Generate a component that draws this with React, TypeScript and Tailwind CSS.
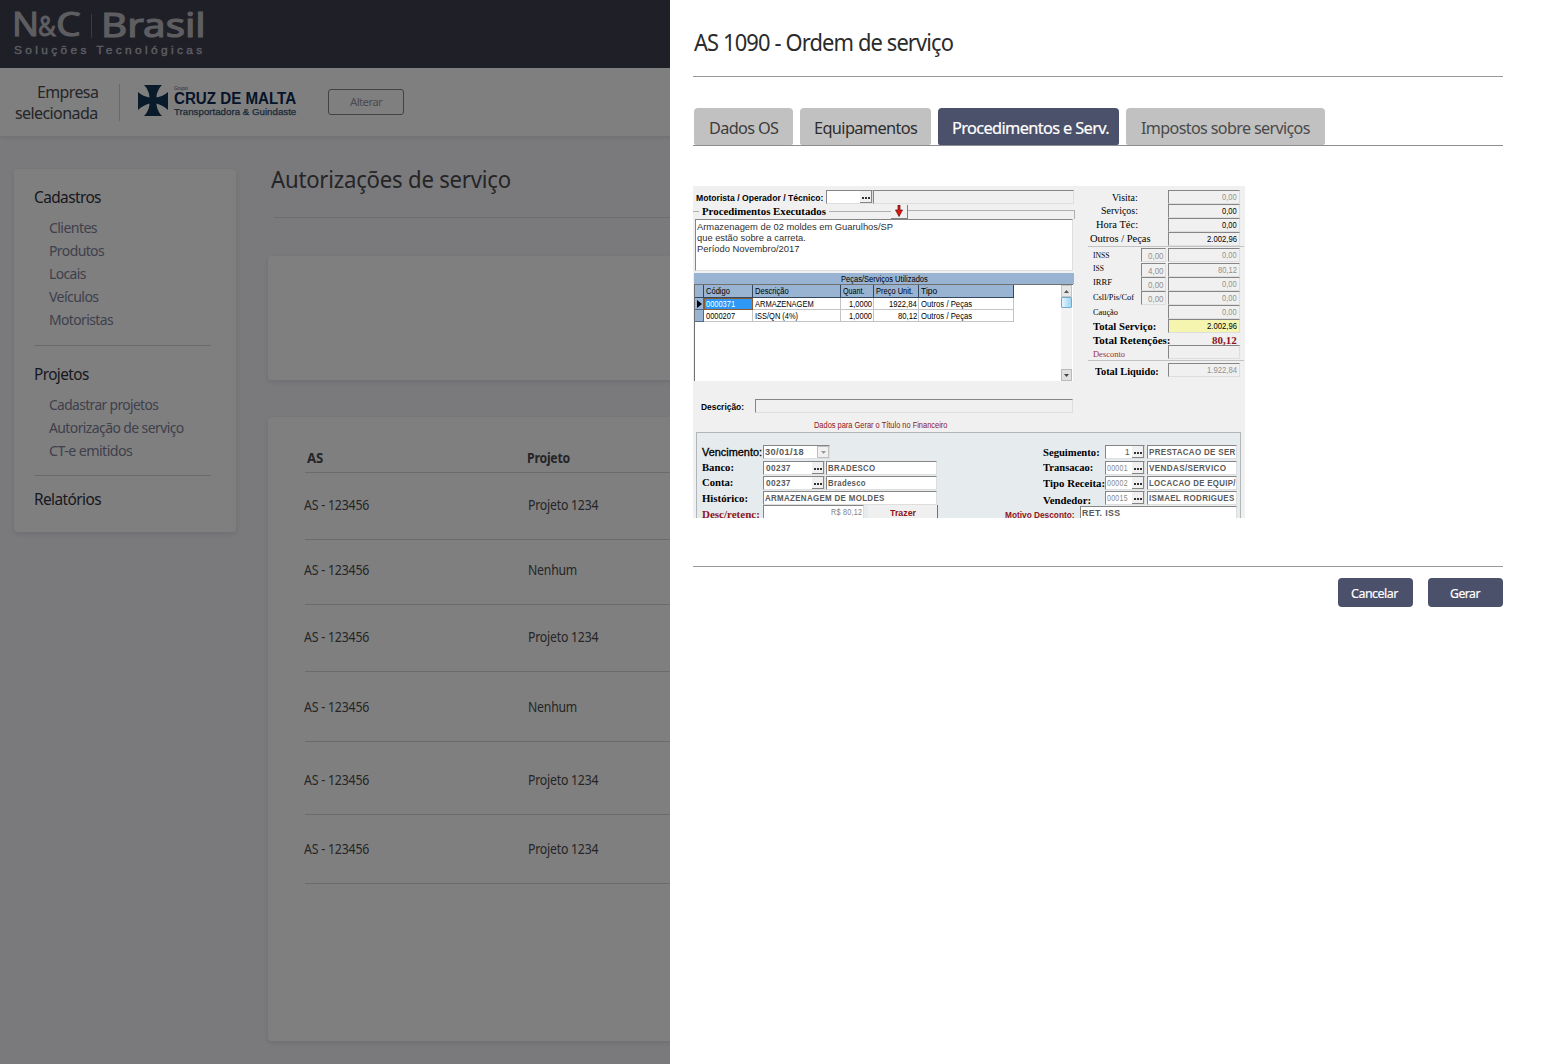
import { useLayoutEffect, useRef, useState } from "react";
import type { ReactNode } from "react";

const SANS = "font-['Noto_Sans',sans-serif]";
const ARIAL = "font-['Liberation_Sans',sans-serif]";
const SERIF = "font-['Liberation_Serif',serif]";

/* One line of text, condensed or widened to fill the width of its box. */
function Fit({ className = "", children }: { className?: string; children: ReactNode }) {
  const box = useRef<HTMLSpanElement>(null);
  const line = useRef<HTMLSpanElement>(null);
  const [scale, setScale] = useState(1);
  useLayoutEffect(() => {
    if (box.current && line.current && line.current.offsetWidth > 0) {
      setScale(box.current.getBoundingClientRect().width / line.current.offsetWidth);
    }
  }, []);
  return (
    <span ref={box} className={`block shrink-0 whitespace-nowrap ${className}`}>
      <span ref={line} className="inline-block origin-left align-top" style={{ transform: `scaleX(${scale})` }}>
        {children}
      </span>
    </span>
  );
}

function Logo() {
  return (
    <div className={`w-[192px] pt-1 tracking-normal text-[#bdbcc2] ${SANS}`}>
      <div className="flex h-9 items-center">
        <div className="flex w-[67px] shrink-0 items-baseline leading-9">
          <Fit className="-ml-[2px] w-[27px] text-[33px] [-webkit-text-stroke:1px_#bdbcc2]">N</Fit>
          <Fit className="-ml-px w-[18px] text-[27px] [-webkit-text-stroke:0.8px_#bdbcc2]">&amp;</Fit>
          <Fit className="w-[25px] text-[33px] [-webkit-text-stroke:1px_#bdbcc2]">C</Fit>
        </div>
        <div className="ml-[10px] mt-[2px] h-6 w-px shrink-0 bg-[#77757f]" />
        <Fit className="ml-[9px] w-[105px] text-[33px] leading-9 [-webkit-text-stroke:1.2px_#bdbcc2]">Brasil</Fit>
      </div>
      <Fit className={`-mt-px w-[192px] text-[10.500px] leading-4 tracking-[3px] [-webkit-text-stroke:0.35px_#bdbcc2] ${ARIAL}`}>
        Soluções Tecnológicas
      </Fit>
    </div>
  );
}

function MalteseCross() {
  return (
    <svg width="30" height="31" viewBox="0 0 30 31" fill="#123456">
      <path d="M6 0H24C21 3 18.500 8 18.500 12.500C22 12 27 10 30 7V25C27 22 22 19.500 18.500 18.500C18.500 23 21 28 24 31H6C9 28 11.500 23 11.500 18.500C8 19.500 3 22 0 25V7C3 10 8 12 11.500 12.500C11.500 8 9 3 6 0Z" />
    </svg>
  );
}

function Group({ title, items }: { title: ReactNode; items: ReactNode }) {
  return (
    <div>
      <div className="h-[23px] text-[17px] leading-[23px] text-[#30303e]">{title}</div>
      <div className="mt-2 pl-[15px] text-[15px] leading-[23px] text-[#807f99]">{items}</div>
    </div>
  );
}

function Sidebar() {
  return (
    <nav className="ml-[14px] mt-[33px] h-[363px] w-[222px] shrink-0 rounded bg-white pl-5 pt-4 shadow-[0_2px_4px_rgba(60,60,90,0.12)]">
      <Group
        title={<Fit className="w-[67px]">Cadastros</Fit>}
        items={
          <>
            <Fit className="w-[48px]">Clientes</Fit>
            <Fit className="w-[55px]">Produtos</Fit>
            <Fit className="w-[37px]">Locais</Fit>
            <Fit className="w-[50px]">Veículos</Fit>
            <Fit className="w-[64px]">Motoristas</Fit>
          </>
        }
      />
      <div className="mt-[14px] h-px w-[177px] bg-[#d6d6da]" />
      <div className="h-4" />
      <Group
        title={<Fit className="w-[55px]">Projetos</Fit>}
        items={
          <>
            <Fit className="w-[109px]">Cadastrar projetos</Fit>
            <Fit className="w-[135px]">Autorização de serviço</Fit>
            <Fit className="w-[83px]">CT-e emitidos</Fit>
          </>
        }
      />
      <div className="mt-[13px] h-px w-[177px] bg-[#d6d6da]" />
      <Fit className="mt-[11px] w-[67px] text-[17px] leading-[23px] text-[#30303e]">Relatórios</Fit>
    </nav>
  );
}

const rows = [
  { project: "Projeto 1234", box: "h-[67px] pt-[22px]" },
  { project: "Nenhum", box: "h-[65px] pt-5" },
  { project: "Projeto 1234", box: "h-[67px] pt-[22px]" },
  { project: "Nenhum", box: "h-[70px] pt-[25px]" },
  { project: "Projeto 1234", box: "h-[73px] pt-7" },
  { project: "Projeto 1234", box: "h-[69px] pt-6" },
];

function Orders() {
  return (
    <main className="ml-8 flex-1 tracking-[-0.015em] text-[#4b4b4f]">
      <Fit className="ml-[3px] mt-[27px] w-[240px] text-[24px] leading-8">Autorizações de serviço</Fit>
      <div className="ml-[6px] mt-[22px] h-px bg-[#d9d9df]" />
      <div className="mt-[38px] h-[124px] rounded bg-white shadow-[0_2px_4px_rgba(60,60,90,0.12)]" />
      <div className="mt-[37px] h-[624px] rounded bg-white pl-[37px] pt-[31px] shadow-[0_2px_4px_rgba(60,60,90,0.12)]">
        <div className="flex h-[25px] border-b border-[#d6d6d8] pl-[2px] text-[14px] font-bold leading-5">
          <Fit className="w-[16px]">AS</Fit>
          <Fit className="ml-[204px] w-[43px]">Projeto</Fit>
        </div>
        {rows.map((row, i) => (
          <div key={i} className={`flex border-b border-[#d6d6d8] text-[13.5px] leading-5 ${row.box}`}>
            <Fit className="-ml-px w-[65px]">AS - 123456</Fit>
            <Fit className={row.project === "Nenhum" ? "ml-[159px] w-[49px]" : "ml-[159px] w-[70px]"}>{row.project}</Fit>
          </div>
        ))}
      </div>
    </main>
  );
}

function BackPage() {
  return (
    <div className={`h-full w-[1200px] bg-[#f4f4f8] tracking-[-0.04em] ${SANS}`}>
      <header className="h-[68px] bg-[#3e3e51] pl-[14px] pt-[3px]">
        <Logo />
      </header>
      <div className="relative flex h-[68px] items-center bg-white shadow-[0_1px_4px_rgba(60,60,90,0.15)]">
        <div className="flex w-[98px] flex-col items-end text-[17px] leading-[21px] text-[#4a4a50]">
          <Fit className="w-[61px]">Empresa</Fit>
          <Fit className="w-[83px]">selecionada</Fit>
        </div>
        <div className="ml-[21px] h-[37px] w-px bg-[#d2d2d6]" />
        <div className="ml-[18px] -mt-[3px]">
          <MalteseCross />
        </div>
        <div className={`ml-[6px] -mt-px tracking-normal ${ARIAL}`}>
          <Fit className="w-[14px] text-[5px] leading-[5px] text-[#476080]">Grupo</Fit>
          <Fit className="w-[122px] text-[16px] font-bold leading-[16px] text-[#0a2850]">CRUZ DE MALTA</Fit>
          <Fit className="w-[122px] text-[9px] leading-[11px] text-[#385370] [-webkit-text-stroke:0.25px_#385370]">Transportadora &amp; Guindaste</Fit>
        </div>
        <button className="ml-8 flex h-[26px] w-[76px] justify-center rounded-[3px] border border-[#85858f] text-[11.5px] leading-6 text-[#98989f]">
          <Fit className="w-[32px]">Alterar</Fit>
        </button>
      </div>
      <div className="flex">
        <Sidebar />
        <Orders />
      </div>
    </div>
  );
}

/* ---- Legacy form shown inside the drawer ---- */

const SUNK = "border-l border-t border-l-[#858585] border-t-[#858585] border-b border-r border-b-[#dedede] border-r-[#dedede]";

function Dots() {
  return (
    <span className="flex h-[12px] w-[12px] shrink-0 items-end justify-center gap-[1px] border-b border-r border-[#858585] bg-[#f0f0f0] pb-[3px]">
      <i className="size-[2px] bg-[#333]" />
      <i className="size-[2px] bg-[#333]" />
      <i className="size-[2px] bg-[#333]" />
    </span>
  );
}

function Work() {
  return (
    <div className="w-[382px] shrink-0">
      <div className="flex h-[14px] items-start pl-[3px]">
        <Fit className="w-[127px] text-[9.500px] font-bold leading-[16px]">Motorista / Operador / Técnico:</Fit>
        <div className={`ml-[3px] flex h-[14px] w-[47px] justify-end bg-white ${SUNK}`}>
          <Dots />
        </div>
        <div className={`h-[14px] w-[201px] ${SUNK}`} />
      </div>
      <div className="flex h-[15px] items-center">
        <div className="h-px w-[6px] bg-[#b0b0b0]" />
        <Fit className={`ml-[3px] w-[124px] text-[11px] font-bold leading-[15px] ${SERIF}`}>Procedimentos Executados</Fit>
        <div className="ml-[3px] h-px w-[62px] bg-[#b0b0b0]" />
        <div className="flex h-[14px] w-[17px] items-center justify-center border-b border-r border-[#808080] bg-[#f0f0f0]">
          <svg width="8" height="12" viewBox="0 0 8 12">
            <path d="M3 0H5V5H7.500L4 11.500L.5 5H3Z" fill="#e01810" stroke="#601010" strokeWidth=".7" />
          </svg>
        </div>
        <div className="h-[9px] flex-1 self-end border-r border-t border-[#b0b0b0]" />
      </div>
      <div className={`ml-[2px] h-[52px] w-[378px] bg-white pl-[1px] pt-[1px] text-[9.500px] leading-[11px] text-[#303030] ${SUNK}`}>
        <Fit className="w-[196px]">Armazenagem de 02 moldes em Guarulhos/SP</Fit>
        <Fit className="w-[109px]">que estão sobre a carreta.</Fit>
        <Fit className="w-[103px]">Período Novembro/2017</Fit>
      </div>
      <div className="ml-px mt-[2px] flex h-[11px] w-[380px] justify-center bg-[#98b4d2] text-[8.500px] leading-[12px]">
        <Fit className="w-[87px]">Peças/Serviços Utilizados</Fit>
      </div>
      <Parts />
      <div className="mt-[18px] flex h-[14px] items-start pl-2">
        <Fit className="w-[43px] text-[9px] font-bold leading-[16px]">Descrição:</Fit>
        <div className={`ml-[11px] h-[14px] w-[318px] ${SUNK}`} />
      </div>
    </div>
  );
}

const HEAD = "border-b border-r border-[#33475f] bg-[#98b4d2] h-[13px]";
const CELL = "border-b border-r border-[#c4c4c4] h-3 bg-white";

function Parts() {
  return (
    <div className="ml-px flex h-[97px] w-[379px] justify-between border-l border-t border-[#707070] bg-white text-[8.500px] leading-[12px] text-black">
      <div className="grid h-[37px] grid-cols-[9px_49px_88px_33px_45px_95px]">
        <div className={HEAD} />
        <div className={`${HEAD} pl-[2px]`}><Fit className="w-[24px]">Código</Fit></div>
        <div className={`${HEAD} pl-[2px]`}><Fit className="w-[34px]">Descrição</Fit></div>
        <div className={`${HEAD} pl-[2px]`}><Fit className="w-[22px]">Quant.</Fit></div>
        <div className={`${HEAD} pl-[2px]`}><Fit className="w-[37px]">Preço Unit.</Fit></div>
        <div className={`${HEAD} pl-[2px]`}><Fit className="w-[16px]">Tipo</Fit></div>

        <div className="flex h-3 items-center border-b border-r border-[#55687f] bg-[#98b4d2] pl-[2px]">
          <svg width="5" height="8" viewBox="0 0 5 8"><path d="M0 0L5 4L0 8Z" /></svg>
        </div>
        <div className="h-3 border border-[#8a5a30] bg-[#2f97f5] pl-px leading-[10px] text-white"><Fit className="w-[29px]">0000371</Fit></div>
        <div className={`${CELL} pl-[2px]`}><Fit className="w-[59px]">ARMAZENAGEM</Fit></div>
        <div className={`${CELL} flex justify-end pr-px`}><Fit className="w-[23px]">1,0000</Fit></div>
        <div className={`${CELL} flex justify-end pr-px`}><Fit className="w-[28px]">1922,84</Fit></div>
        <div className={`${CELL} pl-[2px]`}><Fit className="w-[51px]">Outros / Peças</Fit></div>

        <div className="h-3 border-b border-r border-[#55687f] bg-[#98b4d2]" />
        <div className={`${CELL} pl-[2px]`}><Fit className="w-[29px]">0000207</Fit></div>
        <div className={`${CELL} pl-[2px]`}><Fit className="w-[43px]">ISS/QN (4%)</Fit></div>
        <div className={`${CELL} flex justify-end pr-px`}><Fit className="w-[23px]">1,0000</Fit></div>
        <div className={`${CELL} flex justify-end pr-px`}><Fit className="w-[19px]">80,12</Fit></div>
        <div className={`${CELL} pl-[2px]`}><Fit className="w-[51px]">Outros / Peças</Fit></div>
      </div>
      <div className="mr-px flex h-[96px] w-[11px] flex-col bg-[#f2f2f2]">
        <div className="flex h-3 items-center justify-center border border-[#c4c4c4] bg-[#e6e6e6]">
          <svg width="5" height="3" viewBox="0 0 5 3"><path d="M0 3L2.500 0L5 3Z" fill="#555" /></svg>
        </div>
        <div className="h-[11px] rounded-[1px] border border-[#6fa9cc] bg-gradient-to-r from-[#e4f5fd] to-[#9cd5f2]" />
        <div className="mt-auto flex h-3 items-center justify-center border border-[#bababa] bg-[#e0e0e0]">
          <svg width="5" height="3" viewBox="0 0 5 3"><path d="M0 0L2.500 3L5 0Z" fill="#444" /></svg>
        </div>
      </div>
    </div>
  );
}

function TotalRow({ label, rate, value, box = "", row = "h-[14px]" }: { label: ReactNode; rate?: string; value: ReactNode; box?: string; row?: string }) {
  return (
    <div className={`flex items-start ${row}`}>
      <div className="w-[53px] shrink-0 leading-[15px]">{label}</div>
      {rate ? (
        <div className={`flex h-[14px] w-[25px] shrink-0 justify-end pr-[1px] text-[9.500px] leading-[13px] text-[#909090] ${SUNK} ${ARIAL}`}>
          <Fit className="w-[16px]">{rate}</Fit>
        </div>
      ) : (
        <div className="w-[25px] shrink-0" />
      )}
      <div className={`ml-[2px] flex h-[14px] w-[72px] shrink-0 justify-end pr-[2px] text-[9.500px] leading-[11px] ${ARIAL} ${box || `${SUNK} text-[#909090]`}`}>
        {value}
      </div>
    </div>
  );
}

function Totals() {
  const zero = <Fit className="w-[15px]">0,00</Fit>;
  return (
    <div className={`ml-[13px] w-[157px] text-[11px] ${SERIF}`}>
      <TotalRow label={<Fit className="ml-[24px] w-[26px]">Visita:</Fit>} value={zero} />
      <TotalRow label={<Fit className="ml-[13px] w-[37px] leading-[13px]">Serviços:</Fit>} value={zero} box={`${SUNK} text-black`} />
      <TotalRow label={<Fit className="ml-[8px] w-[42px] leading-[13px]">Hora Téc:</Fit>} value={zero} box={`${SUNK} text-black`} />
      <TotalRow label={<Fit className="ml-[2px] w-[61px] leading-[13px]">Outros / Peças</Fit>} value={<Fit className="w-[30px]">2.002,96</Fit>} box={`${SUNK} text-black`} />
      <div className="mb-[1px] h-px w-[156px] bg-[#c2c2c2]" />
      <div className="text-[9px]">
        <TotalRow row="h-[15px]" label={<Fit className="ml-[5px] w-[17px]">INSS</Fit>} rate="0,00" value={zero} />
        <TotalRow label={<Fit className="ml-[5px] w-[11px] leading-[11px]">ISS</Fit>} rate="4,00" value={<Fit className="w-[19px] leading-[11px]">80,12</Fit>} />
        <TotalRow label={<Fit className="ml-[5px] w-[19px] leading-[11px]">IRRF</Fit>} rate="0,00" value={zero} />
        <TotalRow label={<Fit className="ml-[5px] w-[41px] leading-[13px]">Csll/Pis/Cof</Fit>} rate="0,00" value={zero} />
        <TotalRow row="h-[14px]" label={<Fit className="ml-[5px] w-[25px] leading-[15px]">Caução</Fit>} value={zero} />
      </div>
      <TotalRow row="h-[14px] font-bold" label={<Fit className="ml-[5px] w-[63px]">Total Serviço:</Fit>} value={<Fit className="w-[30px] font-normal">2.002,96</Fit>} box={`${SUNK} bg-[#f5f5b0] text-black`} />
      <TotalRow row="h-[12px] font-bold" label={<Fit className="ml-[5px] w-[78px]">Total Retenções:</Fit>} value={<Fit className={`w-[25px] text-[11px] leading-[14px] ${SERIF}`}>80,12</Fit>} box="text-[#8e1420] pr-[3px]" />
      <TotalRow row="h-[15px] text-[9px] text-[#a03030]" label={<Fit className="ml-[5px] w-[32px] leading-[18px]">Desconto</Fit>} value={null} />
      <div className="mb-[2px] h-px w-[156px] bg-[#c2c2c2]" />
      <TotalRow row="h-[14px] font-bold" label={<Fit className="ml-[7px] w-[64px] leading-[16px]">Total Liquido:</Fit>} value={<Fit className="w-[30px] font-normal">1.922,84</Fit>} />
    </div>
  );
}

const VALUE = "h-[14px] bg-white text-[9px] leading-[12px] tracking-[0.04em] text-[#5a5a5a] flex";

function Finance() {
  return (
    <div className="ml-[3px] flex h-[100px] w-[545px] justify-between border border-[#b2b6b8] bg-[#e6ecee] pl-[5px] pr-[3px] pt-[12px]">
      <div className={`w-[236px] text-[11px] font-bold leading-[13px] ${SERIF}`}>
        <div className="flex h-4">
          <Fit className={`w-[60px] text-[10px] font-normal leading-[16px] [-webkit-text-stroke:0.3px_black] ${ARIAL}`}>Vencimento:</Fit>
          <div className={`ml-[1px] w-[67px] justify-between ${VALUE} ${SUNK} ${ARIAL}`}>
            <Fit className="ml-px w-[39px]">30/01/18</Fit>
            <span className="flex h-3 w-3 items-center justify-center border border-[#c0c0c0] bg-[#f0f0f0]">
              <svg width="5" height="3" viewBox="0 0 5 3"><path d="M0 0L2.500 3L5 0Z" fill="#999" /></svg>
            </span>
          </div>
        </div>
        <div className="flex h-[15px]">
          <Fit className="w-[32px]">Banco:</Fit>
          <div className={`ml-[29px] w-[62px] justify-between ${VALUE} ${SUNK} ${ARIAL}`}><Fit className="ml-[2px] w-[25px]">00237</Fit><Dots /></div>
          <div className={`ml-px w-[111px] ${VALUE} ${SUNK} ${ARIAL}`}><Fit className="ml-px w-[47px]">BRADESCO</Fit></div>
        </div>
        <div className="flex h-[15px]">
          <Fit className="w-[31px]">Conta:</Fit>
          <div className={`ml-[30px] w-[62px] justify-between ${VALUE} ${SUNK} ${ARIAL}`}><Fit className="ml-[2px] w-[25px]">00237</Fit><Dots /></div>
          <div className={`ml-px w-[111px] ${VALUE} ${SUNK} ${ARIAL}`}><Fit className="ml-px w-[38px]">Bradesco</Fit></div>
        </div>
        <div className="flex h-[14px]">
          <Fit className="w-[46px] leading-[15px]">Histórico:</Fit>
          <div className={`ml-[15px] w-[174px] ${VALUE} ${SUNK} ${ARIAL}`}><Fit className="ml-px w-[120px]">ARMAZENAGEM DE MOLDES</Fit></div>
        </div>
        <div className="flex h-[15px]">
          <Fit className="w-[58px] leading-[18px] text-[#8e1420]">Desc/retenc:</Fit>
          <div className={`ml-[3px] w-[101px] justify-end pr-px font-normal ${VALUE} ${SUNK} ${ARIAL}`}><Fit className="w-[31px] text-[#808080]">R$ 80,12</Fit></div>
          <div className={`ml-[4px] flex h-[14px] w-[70px] justify-center border-r border-[#707070] bg-[#f0f0f0] text-[8.500px] leading-[16px] text-[#8e1420] ${ARIAL}`}><Fit className="w-[26px]">Trazer</Fit></div>
        </div>
      </div>
      <div className={`w-[232px] text-[11px] font-bold leading-[14px] ${SERIF}`}>
        <div className="flex h-4 pl-[38px]">
          <Fit className="w-[57px]">Seguimento:</Fit>
          <div className={`ml-[5px] w-[40px] justify-end font-normal ${VALUE} ${SUNK} ${ARIAL}`}><span className="mr-[2px] leading-[13px]">1</span><Dots /></div>
          <div className={`ml-[2px] w-[90px] ${VALUE} ${SUNK} ${ARIAL}`}><Fit className="ml-px w-[87px] leading-[13px]">PRESTACAO DE SER</Fit></div>
        </div>
        <div className="flex h-[15px] pl-[38px]">
          <Fit className="w-[50px] leading-[13px]">Transacao:</Fit>
          <div className={`ml-[12px] w-[40px] justify-between font-normal ${VALUE} ${SUNK} ${ARIAL}`}><Fit className="ml-px w-[21px] text-[#888]">00001</Fit><Dots /></div>
          <div className={`ml-[2px] w-[90px] ${VALUE} ${SUNK} ${ARIAL}`}><Fit className="ml-px w-[77px]">VENDAS/SERVICO</Fit></div>
        </div>
        <div className="flex h-[15px] pl-[38px]">
          <Fit className="w-[62px] leading-[15px]">Tipo Receita:</Fit>
          <div className={`w-[40px] justify-between font-normal ${VALUE} ${SUNK} ${ARIAL}`}><Fit className="ml-px w-[21px] text-[#888]">00002</Fit><Dots /></div>
          <div className={`ml-[2px] w-[90px] ${VALUE} ${SUNK} ${ARIAL}`}><Fit className="ml-px w-[87px]">LOCACAO DE EQUIP/</Fit></div>
        </div>
        <div className="flex h-[15px] pl-[38px]">
          <Fit className="w-[48px] leading-[18px]">Vendedor:</Fit>
          <div className={`ml-[14px] w-[40px] justify-between font-normal ${VALUE} ${SUNK} ${ARIAL}`}><Fit className="ml-px w-[21px] text-[#888]">00015</Fit><Dots /></div>
          <div className={`ml-[2px] w-[90px] ${VALUE} ${SUNK} ${ARIAL}`}><Fit className="ml-px w-[86px]">ISMAEL RODRIGUES</Fit></div>
        </div>
        <div className="flex h-[15px]">
          <Fit className={`w-[70px] text-[9px] leading-[18px] text-[#8e1420] ${ARIAL}`}>Motivo Desconto:</Fit>
          <div className={`ml-[5px] w-[157px] ${VALUE} ${SUNK} ${ARIAL}`}><Fit className="ml-px w-[38px]">RET. ISS</Fit></div>
        </div>
      </div>
    </div>
  );
}

function LegacyForm() {
  return (
    <div className={`mt-10 h-[332px] w-[552px] overflow-hidden bg-[#f0f0f0] pt-[4px] text-black ${ARIAL}`}>
      <div className="flex h-[228px]">
        <Work />
        <Totals />
      </div>
      <Fit className="ml-[121px] mt-px w-[133px] text-[8.500px] leading-[13px] text-[#8e1420]">Dados para Gerar o Título no Financeiro</Fit>
      <Finance />
    </div>
  );
}

function Drawer() {
  return (
    <section className={`absolute inset-y-0 right-0 w-[877px] bg-white pl-[23px] pr-11 ${SANS}`}>
      <Fit className="ml-px mt-[26px] w-[259px] text-[23.500px] leading-8 tracking-[-0.04em] text-[#2b2b2b]">AS 1090 - Ordem de serviço</Fit>
      <div className="mt-[18px] h-px bg-[#999]" />
      <div className="mt-[31px] flex h-[38px] gap-[7px] border-b border-[#8e8e8e] pl-px text-[17px] leading-[39px] tracking-[-0.04em] text-[#3c3c3c]">
        <button className="flex h-[37px] w-[99px] rounded-t rounded-b-[2px] bg-[#c1c1c1] pl-[15px]"><Fit className="w-[69px]">Dados OS</Fit></button>
        <button className="flex h-[37px] w-[131px] rounded-t rounded-b-[2px] bg-[#c1c1c1] pl-[14px] text-[#2e2e2e]"><Fit className="w-[103px]">Equipamentos</Fit></button>
        <button className="flex h-[37px] w-[181px] rounded-t rounded-b-[2px] bg-[#4b506b] pl-[14px] text-white [-webkit-text-stroke:0.2px_white]"><Fit className="w-[157px]">Procedimentos e Serv.</Fit></button>
        <button className="flex h-[37px] w-[199px] rounded-t rounded-b-[2px] bg-[#c1c1c1] pl-[15px] text-[#4a4a4a]"><Fit className="w-[169px]">Impostos sobre serviços</Fit></button>
      </div>
      <LegacyForm />
      <div className="mt-12 h-px bg-[#999]" />
      <div className="mt-[11px] flex justify-end gap-[15px] text-[13px] leading-[30px] tracking-[-0.04em] text-white [-webkit-text-stroke:0.2px_white]">
        <button className="flex h-[29px] w-[75px] rounded bg-[#4b506b] pl-[13px]"><Fit className="w-[47px]">Cancelar</Fit></button>
        <button className="flex h-[29px] w-[75px] rounded bg-[#4b506b] pl-[22px]"><Fit className="w-[30px]">Gerar</Fit></button>
      </div>
    </section>
  );
}

export default function App() {
  return (
    <div className="relative h-[1064px] w-[1547px] overflow-hidden">
      <BackPage />
      <div className="absolute inset-0 bg-black/50" />
      <Drawer />
    </div>
  );
}
